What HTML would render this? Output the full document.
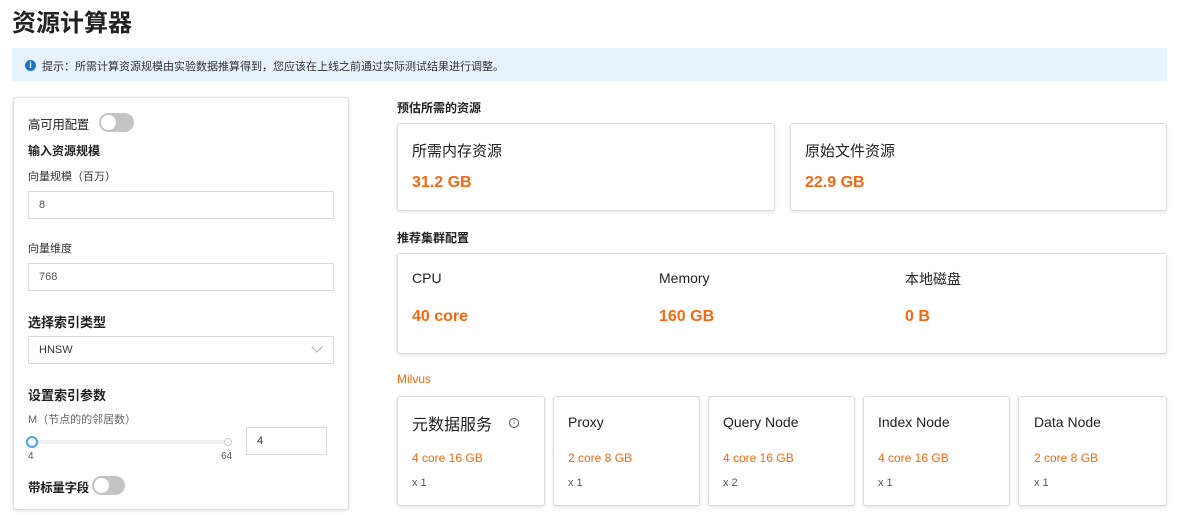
<!DOCTYPE html>
<html><head><meta charset="utf-8"><style>
*{box-sizing:border-box;margin:0;padding:0}
body{width:1184px;height:515px;background:#fff;font-family:"Liberation Sans","Noto Sans CJK SC",sans-serif;color:#222;position:relative;overflow:hidden}
.a{position:absolute;white-space:nowrap}
.card{position:absolute;border:1px solid #ddd;border-radius:3px;box-shadow:0 1px 3px rgba(0,0,0,.12);background:#fff}
.or{color:#f5680f;font-weight:bold}
.inp{position:absolute;border:1px solid #d9d9d9;background:#fff;font-size:11px;color:#555;padding-left:10px;display:flex;align-items:center}
.tog{position:absolute;width:36px;height:19px;border-radius:10px;background:#c4c4c4}
.tog::after{content:"";position:absolute;left:2px;top:2px;width:15px;height:15px;border-radius:50%;background:#fff}
.b{font-weight:bold}
</style></head><body>
<div class="a b" style="left:12px;top:3px;font-size:24px;color:#222">资源计算器</div>
<div class="a" style="left:12px;top:48px;width:1155px;height:33px;background:#e6f2fc"></div>
<div class="a" style="left:25px;top:60px;width:11px;height:11px;border-radius:50%;background:#1e73c8;color:#fff;font-size:9px;font-weight:bold;text-align:center;line-height:11px">i</div>
<div class="a" style="left:42px;top:58px;font-size:11px;color:#333">提示：所需计算资源规模由实验数据推算得到，您应该在上线之前通过实际测试结果进行调整。</div>

<div class="card" style="left:13px;top:97px;width:336px;height:413px"></div>
<div class="a" style="left:28px;top:114px;font-size:12.5px;color:#222;letter-spacing:-0.3px">高可用配置</div>
<div class="tog" style="left:99px;top:113px;width:35px"></div>
<div class="a b" style="left:28px;top:142px;font-size:12px">输入资源规模</div>
<div class="a" style="left:28px;top:168px;font-size:11px;color:#333">向量规模（百万）</div>
<div class="inp" style="left:28px;top:191px;width:306px;height:28px">8</div>
<div class="a" style="left:28px;top:240px;font-size:11px;color:#333">向量维度</div>
<div class="inp" style="left:28px;top:263px;width:306px;height:28px">768</div>
<div class="a b" style="left:28px;top:312px;font-size:13px">选择索引类型</div>
<div class="inp" style="left:28px;top:336px;width:306px;height:28px;color:#333">HNSW</div>
<div class="a" style="left:313px;top:343px;width:8px;height:8px;border-right:1px solid #aaa;border-bottom:1px solid #aaa;transform:rotate(45deg)"></div>
<div class="a b" style="left:28px;top:385px;font-size:13px">设置索引参数</div>
<div class="a" style="left:28px;top:411px;font-size:11px;color:#666">M（节点的的邻居数）</div>
<div class="a" style="left:32px;top:440px;width:196px;height:4px;background:#eee;border-radius:2px"></div>
<div class="a" style="left:26px;top:436px;width:12px;height:12px;border-radius:50%;border:2px solid #4aa3e8;background:#fff"></div>
<div class="a" style="left:224px;top:438px;width:8px;height:8px;border-radius:50%;border:1px solid #ccc;background:#fff"></div>
<div class="a" style="left:28px;top:451px;font-size:10px;color:#555">4</div>
<div class="a" style="left:221px;top:451px;font-size:10px;color:#555">64</div>
<div class="inp" style="left:246px;top:427px;width:81px;height:28px;color:#333">4</div>
<div class="a b" style="left:28px;top:477px;font-size:12.5px;letter-spacing:-0.3px">带标量字段</div>
<div class="tog" style="left:92px;top:476px;width:33px"></div>

<div class="a b" style="left:397px;top:99px;font-size:12px">预估所需的资源</div>
<div class="card" style="left:397px;top:123px;width:378px;height:88px"></div>
<div class="a" style="left:412px;top:140px;font-size:15px">所需内存资源</div>
<div class="a or" style="left:412px;top:174px;font-size:16px">31.2 GB</div>
<div class="card" style="left:790px;top:123px;width:377px;height:88px"></div>
<div class="a" style="left:805px;top:140px;font-size:15px">原始文件资源</div>
<div class="a or" style="left:805px;top:174px;font-size:16px">22.9 GB</div>

<div class="a b" style="left:397px;top:229px;font-size:12px">推荐集群配置</div>
<div class="card" style="left:397px;top:253px;width:770px;height:101px"></div>
<div class="a" style="left:412px;top:270px;font-size:14px">CPU</div>
<div class="a or" style="left:412px;top:308px;font-size:16px">40 core</div>
<div class="a" style="left:659px;top:270px;font-size:14px">Memory</div>
<div class="a or" style="left:659px;top:308px;font-size:16px">160 GB</div>
<div class="a" style="left:905px;top:269px;font-size:14px">本地磁盘</div>
<div class="a or" style="left:905px;top:308px;font-size:16px">0 B</div>

<div class="a or" style="left:397px;top:372px;font-size:12px;font-weight:normal">Milvus</div>

<div class="card" style="left:397px;top:396px;width:148px;height:110px"></div>
<div class="a" style="left:412px;top:411px;font-size:16px">元数据服务</div>
<div class="a" style="left:509px;top:418px;width:10px;height:10px;border:1px solid #555;border-radius:50%;font-size:7px;text-align:center;line-height:8px;color:#555">i</div>
<div class="a or" style="left:412px;top:451px;font-size:12px;font-weight:normal">4 core 16 GB</div>
<div class="a" style="left:412px;top:477px;font-size:11px;color:#555">x 1</div>

<div class="card" style="left:553px;top:396px;width:147px;height:110px"></div>
<div class="a" style="left:568px;top:414px;font-size:14px">Proxy</div>
<div class="a or" style="left:568px;top:451px;font-size:12px;font-weight:normal">2 core 8 GB</div>
<div class="a" style="left:568px;top:477px;font-size:11px;color:#555">x 1</div>

<div class="card" style="left:708px;top:396px;width:147px;height:110px"></div>
<div class="a" style="left:723px;top:414px;font-size:14px">Query Node</div>
<div class="a or" style="left:723px;top:451px;font-size:12px;font-weight:normal">4 core 16 GB</div>
<div class="a" style="left:723px;top:477px;font-size:11px;color:#555">x 2</div>

<div class="card" style="left:863px;top:396px;width:147px;height:110px"></div>
<div class="a" style="left:878px;top:414px;font-size:14px">Index Node</div>
<div class="a or" style="left:878px;top:451px;font-size:12px;font-weight:normal">4 core 16 GB</div>
<div class="a" style="left:878px;top:477px;font-size:11px;color:#555">x 1</div>

<div class="card" style="left:1018px;top:396px;width:149px;height:110px"></div>
<div class="a" style="left:1034px;top:414px;font-size:14px">Data Node</div>
<div class="a or" style="left:1034px;top:451px;font-size:12px;font-weight:normal">2 core 8 GB</div>
<div class="a" style="left:1034px;top:477px;font-size:11px;color:#555">x 1</div>
</body></html>
